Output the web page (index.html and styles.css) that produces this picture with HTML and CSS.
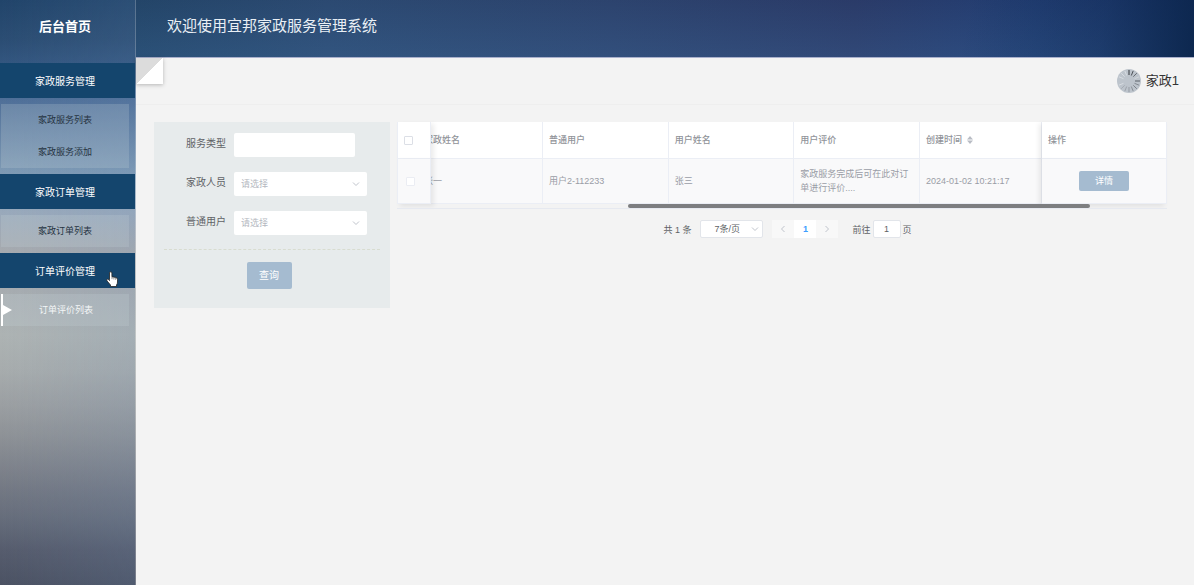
FILE: index.html
```
<!DOCTYPE html>
<html lang="zh-CN">
<head>
  <meta charset="UTF-8">
  <title>宜邦家政服务管理系统</title>
  <link rel="stylesheet" href="styles.css">
</head>
<body>

<div class="layout">
  <aside class="sidebar">
    <a class="brand" href="#">后台首页</a>
    <nav>
      <button class="menu-title" type="button">家政服务管理</button>
      <div class="submenu">
        <a href="#">家政服务列表</a>
        <a href="#">家政服务添加</a>
      </div>
      <button class="menu-title" type="button">家政订单管理</button>
      <div class="submenu">
        <a href="#">家政订单列表</a>
      </div>
      <button class="menu-title" type="button">订单评价管理
        <svg class="hand" viewBox="0 0 12 16"><path d="M3.500 8.500V2a1.200 1.200 0 0 1 2.400 0v3.700l4 .8q1.600.4 1.600 2V11q0 2-1 3v1.500H4.500V14L1 9.900Q.2 8.500 1.300 8.100q.8-.3 2.200 1.500z" fill="#fff" stroke="#222" stroke-width=".8"/><path d="M6 6v2.200M7.900 6.500v2M9.700 7v1.800" stroke="#222" stroke-width=".5"/></svg>
      </button>
      <div class="submenu">
        <a class="active" href="#">订单评价列表</a>
      </div>
    </nav>
  </aside>

  <div class="main">
    <header class="topbar"><h1>欢迎使用宜邦家政服务管理系统</h1></header>

    <div class="userbar">
      <button class="fold" type="button" aria-label="折叠"></button>
      <div class="user">
        <svg class="avatar" viewBox="0 0 24 24">
          <circle cx="12" cy="12" r="12" fill="#bdc4cc"/>
          <g stroke-width="1">
            <path d="M12 1v5" stroke="#30343a"/>
            <path d="M16.200 1.900l-1.900 4.600" stroke="#4a4f56"/>
            <path d="M19.800 4.200l-3.500 3.500" stroke="#666b72"/>
            <path d="M22.100 7.800l-4.600 1.900" stroke="#fff" opacity=".3"/>
            <path d="M23 12h-5" stroke="#5b6068"/>
            <path d="M22.100 16.200l-4.600-1.900" stroke="#858b93"/>
            <path d="M19.800 19.800l-3.500-3.500" stroke="#7d838b"/>
            <path d="M16.200 22.100l-1.900-4.600" stroke="#8b9199"/>
            <path d="M12 23v-5" stroke="#959ba3"/>
            <path d="M7.800 22.100l1.900-4.600" stroke="#9da3ab"/>
            <path d="M4.200 19.800l3.500-3.500" stroke="#a5abb3"/>
            <path d="M1.900 16.200l4.600-1.900M4.200 4.200l3.500 3.500M7.800 1.900l1.900 4.600M1.900 7.800l4.600 1.900" stroke="#d8dde2"/>
          </g>
        </svg>
        <span>家政1</span>
      </div>
    </div>

    <main class="content">
      <form class="search">
        <div class="field">
          <label for="type">服务类型</label>
          <input id="type" type="text">
        </div>
        <div class="field">
          <label for="staff">家政人员</label>
          <div class="select">
            <select id="staff"><option>请选择</option></select>
            <svg class="arrow" viewBox="0 0 8 8"><path d="M1 2.500l3 3 3-3"/></svg>
          </div>
        </div>
        <div class="field">
          <label for="customer">普通用户</label>
          <div class="select">
            <select id="customer"><option>请选择</option></select>
            <svg class="arrow" viewBox="0 0 8 8"><path d="M1 2.500l3 3 3-3"/></svg>
          </div>
        </div>
        <div class="search-actions"><button type="button">查询</button></div>
      </form>

      <section class="list">
        <table>
          <colgroup>
            <col class="col-check"><col class="col-staff"><col><col><col><col class="col-time"><col class="col-action">
          </colgroup>
          <thead>
            <tr>
              <th class="fixed-left"><input type="checkbox" aria-label="全选"></th>
              <th class="staff">家政姓名</th>
              <th>普通用户</th>
              <th>用户姓名</th>
              <th>用户评价</th>
              <th>创建时间 <svg class="sort" viewBox="0 0 6 8"><path d="M0 3.500l3-3.500 3 3.500zM0 4.500h6l-3 3.500z"/></svg></th>
              <th class="fixed-right">操作</th>
            </tr>
          </thead>
          <tbody>
            <tr>
              <td class="fixed-left"><input type="checkbox" aria-label="选择"></td>
              <td class="staff">张一</td>
              <td>用户2-112233</td>
              <td>张三</td>
              <td>家政服务完成后可在此对订单进行评价....</td>
              <td>2024-01-02 10:21:17</td>
              <td class="fixed-right"><button class="detail" type="button">详情</button></td>
            </tr>
          </tbody>
        </table>
        <div class="scrollbar"><div class="thumb"></div></div>

        <div class="pagination">
          <span class="total">共 1 条</span>
          <div class="select size">
            <select aria-label="每页条数"><option>7条/页</option></select>
            <svg class="arrow" viewBox="0 0 8 8"><path d="M1 2.500l3 3 3-3"/></svg>
          </div>
          <div class="pager">
            <button type="button" aria-label="上一页" disabled><svg class="arrow" viewBox="0 0 8 8"><path d="M5.500 1l-3 3 3 3"/></svg></button>
            <button class="current" type="button">1</button>
            <button type="button" aria-label="下一页" disabled><svg class="arrow" viewBox="0 0 8 8"><path d="M2.500 1l3 3-3 3"/></svg></button>
          </div>
          <label class="jump">前往 <input type="text" value="1"> 页</label>
        </div>
      </section>
    </main>
  </div>
</div>

</body>
</html>
```
FILE: styles.css
```
* {
  box-sizing: border-box;
}

body {
  margin: 0;
  background: #f3f3f3;
  color: #606266;
  font-family: "Liberation Sans", "Noto Sans CJK SC", sans-serif;
  font-size: 9px;
}

button, input, select {
  margin: 0;
  padding: 0;
  border: none;
  font: inherit;
  color: inherit;
}

a {
  color: inherit;
  text-decoration: none;
}

.layout {
  display: flex;
  min-height: 100vh;
}

/* sidebar */
.sidebar {
  flex: 0 0 136px;
  border-right: 1px solid rgba(255, 255, 255, 0.25);
  background:
    linear-gradient(90deg, rgba(90, 120, 170, 0), rgba(110, 145, 190, 0.14)),
    linear-gradient(#21446a 0, #2b4d73 40px, #33567f 64px, #4f6f98 100px, #7c98b3 170px, #99a9bb 212px, #a6aaaf 250px, #a7acb0 290px, #adb3b3 335px, #a7acad 370px, #9b9fa2 405px, #8c9095 440px, #757a85 485px, #656c7a 520px, #565c6d 550px, #4b5263 100%);
}

.brand {
  display: block;
  height: 63px;
  padding-right: 5px;
  color: #fff;
  font-size: 13px;
  font-weight: bold;
  line-height: 54px;
  text-align: center;
}

.menu-title {
  display: block;
  position: relative;
  width: 100%;
  height: 35px;
  padding-right: 5px;
  background: #14456d;
  color: #fff;
  font-size: 10px;
  text-align: center;
}

.hand {
  position: absolute;
  left: 106px;
  top: 18px;
  width: 12px;
  height: 16px;
  fill: none;
}

.submenu {
  margin: 6px 6px 6px 1px;
  background: rgba(200, 215, 220, 0.22);
}

.submenu a {
  display: block;
  height: 32px;
  color: #263442;
  line-height: 33px;
  text-align: center;
}

.submenu .active {
  position: relative;
  border-left: 2px solid #fff;
  color: #f4f6f7;
}

.submenu .active::before {
  content: "";
  position: absolute;
  left: 0;
  top: 11px;
  border: 5px solid transparent;
  border-left: 9px solid #fff;
}

/* header */
.main {
  flex: 1;
  min-width: 0;
}

.topbar {
  height: 58px;
  padding-left: 31px;
  border-bottom: 1px solid #a9b0cc;
  background:
    linear-gradient(100deg, rgba(10, 36, 74, 0) 78%, rgba(10, 36, 74, 0.35) 91%, rgba(10, 36, 74, 0.9)),
    linear-gradient(rgba(20, 50, 90, 0.1), rgba(60, 110, 160, 0.25)),
    linear-gradient(90deg, #25476a, #2e4c74 18%, #2f4570 45%, #2d3c6a 68%, #244077 85%, #203c74);
}

.topbar h1 {
  margin: 0;
  color: #e9eff5;
  font-size: 15px;
  font-weight: normal;
  line-height: 52px;
}

.userbar {
  display: flex;
  justify-content: space-between;
  height: 47px;
  padding-right: 15px;
  border-bottom: 1px solid #eee;
}

.fold {
  width: 27px;
  height: 26px;
  background: linear-gradient(135deg, #dcdcdc 50%, #fff 50%);
  box-shadow: 0 1px 4px rgba(0, 0, 0, 0.25);
}

.user {
  display: flex;
  align-items: center;
  gap: 5px;
  color: #333;
  font-size: 13px;
  line-height: 16px;
}

.avatar {
  width: 24px;
  height: 24px;
}

.content {
  display: flex;
  align-items: flex-start;
  gap: 7px;
  padding: 17px 27px 17px 18px;
}

/* search form */
.search {
  flex: 0 0 236px;
  padding: 11px 10px 19px;
  background: #e7ebec;
}

.field {
  display: flex;
  align-items: center;
  gap: 8px;
  margin-bottom: 15px;
}

.field:nth-child(3) {
  margin-bottom: 14px;
}

.field label {
  width: 62px;
  font-size: 10px;
  line-height: 12px;
  padding-bottom: 2px;
  text-align: right;
}

.field input {
  width: 121px;
  height: 24px;
  padding: 0 7px;
  border-radius: 2px;
  background: #fff;
}

.select {
  display: grid;
  width: 133px;
  height: 24px;
}

.select > * {
  grid-area: 1 / 1;
}

.select select {
  padding: 0 7px;
  appearance: none;
  border-radius: 2px;
  background: #fff;
  color: #b4b8c0;
}

.arrow {
  place-self: center end;
  width: 8px;
  height: 8px;
  margin-right: 7px;
  fill: none;
  stroke: #c0c4cc;
  pointer-events: none;
}

.search-actions {
  padding-top: 12px;
  border-top: 1px dashed #d8dcd0;
  text-align: center;
}

.search-actions button {
  width: 45px;
  height: 27px;
  padding-bottom: 2px;
  border-radius: 2px;
  background: #a5bbd0;
  color: #fff;
  font-size: 10px;
  margin-right: 6px;
}

/* table */
.list {
  flex: 1;
  min-width: 0;
}

table {
  width: 100%;
  table-layout: fixed;
  border-collapse: separate;
  border-spacing: 0;
  color: #999da6;
}

.col-check {
  width: 34px;
}

.col-staff {
  width: 112px;
}

.col-time {
  width: 122px;
}

.col-action {
  width: 125px;
}

th, td {
  padding: 0 6px;
  border-right: 1px solid #ebeef5;
  border-bottom: 1px solid #ebeef5;
  background: #fff;
  line-height: 14px;
  text-align: left;
}

th {
  height: 37px;
  color: #909399;
  font-weight: 500;
}

td {
  height: 45px;
  background: #f9f9fa;
}

/* the name column is partly scrolled under the checkbox column */
.staff {
  padding-left: 0;
  text-indent: -7px;
}

.fixed-left, .fixed-right {
  position: relative;
  z-index: 1;
}

.fixed-left {
  border-left: 1px solid #ebeef5;
  box-shadow: 3px 2px 5px rgba(0, 0, 0, 0.08);
}

.fixed-right {
  box-shadow: -3px 2px 5px rgba(0, 0, 0, 0.08);
}

td.fixed-left {
  padding-left: 8px;
}

td.fixed-right {
  text-align: center;
}

input[type="checkbox"] {
  display: block;
  width: 9px;
  height: 9px;
  appearance: none;
  border: 1px solid #dcdfe6;
  border-radius: 1px;
  background: #fff;
}

td input[type="checkbox"] {
  border-color: #ebedf3;
}

.sort {
  width: 6px;
  height: 8px;
  margin-left: 2px;
  vertical-align: -1px;
  fill: #b8bcc4;
}

.detail {
  width: 50px;
  height: 20px;
  border-radius: 2px;
  background: #a5bbd0;
  color: #fff;
}

.scrollbar {
  position: relative;
  z-index: 2;
  height: 5px;
  border-bottom: 1px solid #e6e9f0;
}

.thumb {
  width: 60%;
  height: 4px;
  margin-left: 30%;
  border-radius: 2px;
  background: #7d7e80;
}

/* pagination */
.pagination {
  display: flex;
  align-items: center;
  justify-content: center;
  gap: 9px;
  margin-top: 11px;
  padding-left: 11px;
}

.size {
  width: 63px;
  height: 18px;
}

.size select {
  padding: 0 13px;
  border: 1px solid #e2e5ea;
  color: #606266;
}

.size .arrow {
  margin-right: 4px;
}

.pager {
  display: flex;
}

.pager button {
  width: 22px;
  height: 18px;
  background: #f8f8f8;
}

.pager .arrow {
  display: block;
  margin: 0 auto;
}

.pager .current {
  background: #fff;
  color: #409eff;
  font-weight: bold;
}

.jump {
  display: flex;
  align-items: center;
  gap: 2px;
  margin-left: 5px;
}

.jump input {
  width: 28px;
  height: 18px;
  border: 1px solid #e2e5ea;
  border-radius: 2px;
  background: #fff;
  text-align: center;
}
```
